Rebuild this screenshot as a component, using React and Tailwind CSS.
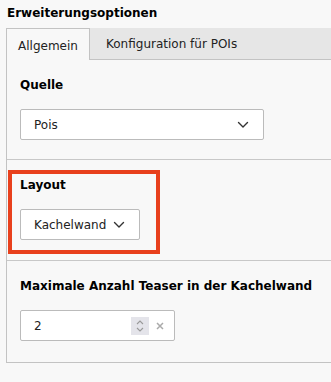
import React from "react";

function Chevron({ className = "" }) {
  return (
    <svg className={className} width="12" height="8" viewBox="0 0 12 8" fill="none">
      <path d="M1.5 1.5 L6 6 L10.5 1.5" stroke="#333" strokeWidth="1.4" strokeLinecap="round" strokeLinejoin="round" />
    </svg>
  );
}

export default function App() {
  return (
    <div className="relative w-[331px] h-[382px] overflow-hidden bg-[#f8f8f8] text-[12px] text-[#333]" style={{ fontFamily: '"DejaVu Sans", Verdana, sans-serif' }}>
      <div className="pl-[7px] pt-[5px] h-[28px] font-bold text-black leading-[16px]">Erweiterungsoptionen</div>
      <div className="ml-[6px]">
        <div className="flex h-[32px] bg-[#e6e6e6]">
          <div className="w-[84px] h-[32px] border border-b-0 border-[#c3c3c3] bg-[#f8f8f8] flex items-center justify-center text-[#222] pt-[2px]">Allgemein</div>
          <div className="flex-1 border-b border-[#c3c3c3] flex items-center pl-[16px] text-[#222] pt-[1px]">Konfiguration für POIs</div>
        </div>
        <div className="border-l border-b border-[#c3c3c3] h-[303px]">
          <div className="h-[100px] pt-[16px] pl-[13px] border-b border-[#c8c8c8]">
            <div className="h-[18px] leading-[18px] font-bold text-black">Quelle</div>
            <div className="mt-[15px] w-[244px] h-[31px] bg-white border border-[#bbb] rounded-[2px] flex items-center justify-between pl-[13px] pr-[14px] text-[#222]">
              <span>Pois</span>
              <Chevron />
            </div>
          </div>
          <div className="h-[101px] pt-[16px] pl-[13px] border-b border-[#c8c8c8]">
            <div className="h-[18px] leading-[18px] font-bold text-black">Layout</div>
            <div className="mt-[15px] w-[120px] h-[31px] bg-white border border-[#bbb] rounded-[2px] flex items-center justify-between pl-[13px] pr-[14px] text-[#222]">
              <span>Kachelwand</span>
              <Chevron />
            </div>
          </div>
          <div className="h-[100px] pt-[16px] pl-[13px]">
            <div className="h-[18px] leading-[18px] font-bold text-black">Maximale Anzahl Teaser in der Kachelwand</div>
            <div className="mt-[15px] w-[155px] h-[31px] bg-white border border-[#bbb] rounded-[2px] flex items-center pl-[13px] pr-[10px] text-[#222]">
              <span className="flex-1">2</span>
              <div className="w-[18px] h-[18px] bg-[#e4e4ea] flex flex-col items-center justify-center gap-[2px]">
                <svg width="8" height="5" viewBox="0 0 8 5" fill="none"><path d="M1 4 L4 1 L7 4" stroke="#999" strokeWidth="1.1" /></svg>
                <svg width="8" height="5" viewBox="0 0 8 5" fill="none"><path d="M1 1 L4 4 L7 1" stroke="#999" strokeWidth="1.1" /></svg>
              </div>
              <svg className="ml-[7px]" width="8" height="8" viewBox="0 0 8 8" fill="none"><path d="M1 1 L7 7 M7 1 L1 7" stroke="#aaa" strokeWidth="1.5" /></svg>
            </div>
          </div>
        </div>
      </div>
      <div className="absolute left-[8px] top-[170px] w-[152px] h-[84px] border-[4px] border-[#e8401c]" />
    </div>
  );
}
